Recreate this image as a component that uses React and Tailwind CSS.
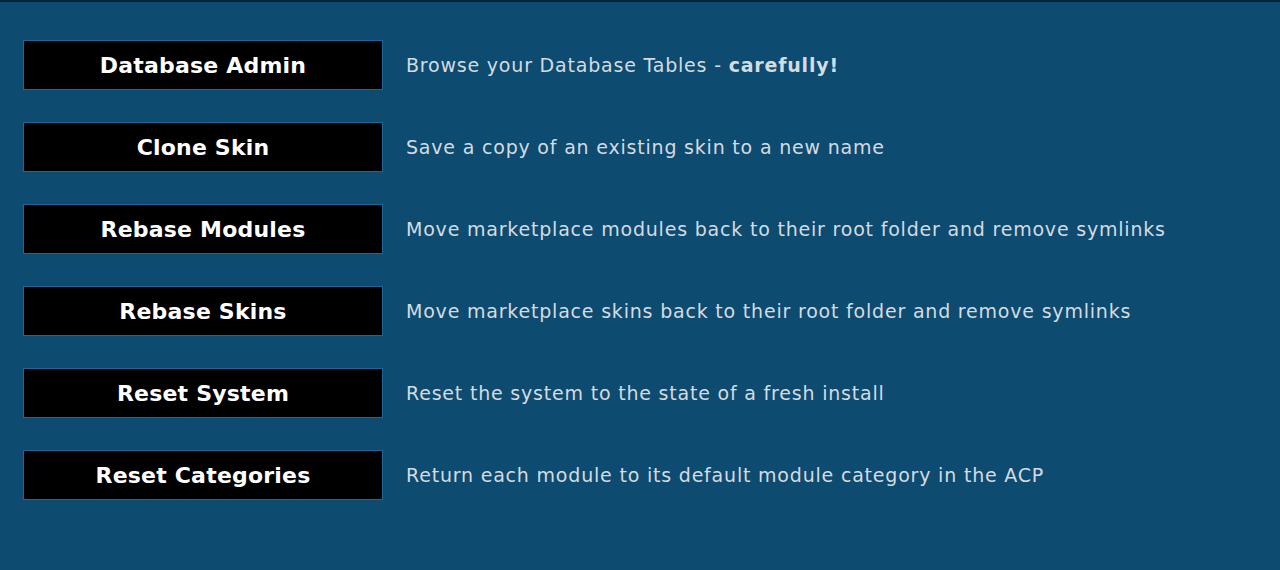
const rows = [
  { label: "Database Admin", desc: "Browse your Database Tables - ", bold: "carefully!" },
  { label: "Clone Skin", desc: "Save a copy of an existing skin to a new name" },
  { label: "Rebase Modules", desc: "Move marketplace modules back to their root folder and remove symlinks" },
  { label: "Rebase Skins", desc: "Move marketplace skins back to their root folder and remove symlinks" },
  { label: "Reset System", desc: "Reset the system to the state of a fresh install" },
  { label: "Reset Categories", desc: "Return each module to its default module category in the ACP" },
];

export default function App() {
  return (
    <div
      className="w-[1280px] h-[570px] bg-[#0d4b70] border-t-2 border-[#07263a] overflow-hidden"
      style={{ fontFamily: '"DejaVu Sans", Verdana, sans-serif' }}
    >
      <div className="flex flex-col gap-[32px] pt-[38px] pl-[23px]">
        {rows.map((r) => (
          <div key={r.label} className="flex items-center">
            <button className="w-[360px] h-[50px] bg-black border border-[#1b679a] text-white font-bold text-[22px] tracking-[0.2px] flex items-center justify-center">
              {r.label}
            </button>
            <p className="ml-[23px] text-[19px] tracking-[0.8px] text-[#d4dbe1]">
              {r.desc}
              {r.bold && <b className="font-bold">{r.bold}</b>}
            </p>
          </div>
        ))}
      </div>
    </div>
  );
}
